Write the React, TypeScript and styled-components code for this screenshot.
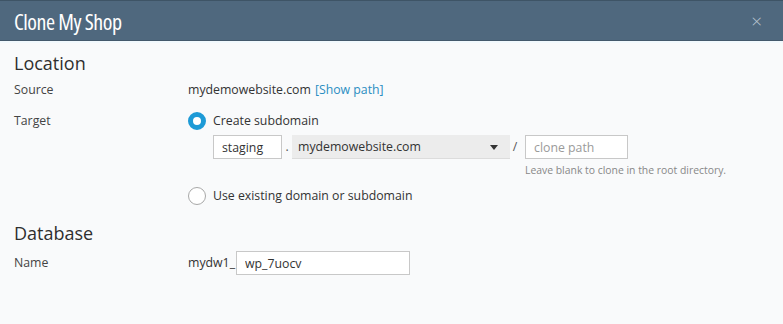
import React from "react";
import styled, { createGlobalStyle } from "styled-components";

//====////==== COMPONENTE ====\\\\====\\
const App = () => {
  return (
    <>
      <Global />
      <Dialog>
        <Header>
          <Title>Clone My Shop</Title>
          <Close>×</Close>
        </Header>
        <Body>
          <Heading>Location</Heading>
          <Row>
            <Label>Source</Label>
            <Field>
              mydemowebsite.com <Link>[Show path]</Link>
            </Field>
          </Row>
          <Row top={13}>
            <Label>Target</Label>
            <Options>
              <Radio>
                <Dot checked />
                Create subdomain
              </Radio>
              <Inline>
                <Input width={69} defaultValue="staging" />
                <Sep>.</Sep>
                <Select>
                  mydemowebsite.com
                  <Caret />
                </Select>
                <Sep>/</Sep>
                <PathBox>
                  <Input width={103} placeholder="clone path" />
                  <Hint>Leave blank to clone in the root directory.</Hint>
                </PathBox>
              </Inline>
              <Radio>
                <Dot />
                Use existing domain or subdomain
              </Radio>
            </Options>
          </Row>
          <Heading second>Database</Heading>
          <Row top={2} center>
            <Label>Name</Label>
            <Field tight>
              mydw1_
              <Input width={174} defaultValue="wp_7uocv" />
            </Field>
          </Row>
        </Body>
      </Dialog>
    </>
  );
};

//====////==== ESTILOS ====\\\\====\\
const Global = createGlobalStyle`
  body {
    margin: 0;
    background: #f9fafb;
    font-family: "Open Sans", "Noto Sans", sans-serif;
    color: #3b3b3b;
  }
`;

const Dialog = styled.div`
  width: 783px;
  height: 324px;
  background: #f9fafb;
`;

const Header = styled.div`
  height: 41px;
  box-sizing: border-box;
  background: #4f687e;
  border-top: 1px solid #3e5466;
  border-bottom: 1px solid #44596b;
  padding: 0 14px;
  display: flex;
  align-items: center;
  justify-content: space-between;
`;

const Title = styled.h1`
  margin: 0;
  font-size: 22px;
  font-weight: 400;
  font-stretch: 80%;
  color: #fff;
  letter-spacing: -0.45px;
`;

const Close = styled.span`
  color: #b9c6d1;
  font-size: 19px;
  font-weight: 300;
  margin-right: 7px;
`;

const Body = styled.div`
  border-top: 2px solid #f2f9fd;
  padding: 8px 14px;
`;

const Heading = styled.h2<{ second?: boolean }>`
  margin: ${(p) => (p.second ? "16px" : "0")} 0 6px;
  font-size: 18px;
  font-weight: 400;
  color: #2f2f2f;
`;

const Row = styled.div<{ top?: number; center?: boolean }>`
  display: flex;
  align-items: ${(p) => (p.center ? "center" : "flex-start")};
  margin-top: ${(p) => p.top ?? 0}px;
  font-size: 12.3px;
  line-height: 18px;
`;

const Label = styled.div`
  width: 174px;
  flex-shrink: 0;
  color: #444;
`;

const Field = styled.div<{ tight?: boolean }>`
  display: flex;
  align-items: center;
  gap: ${(p) => (p.tight ? 1 : 4)}px;
  color: #333;
`;

const Link = styled.span`
  color: #2b8ec2;
`;

const Options = styled.div`
  display: flex;
  flex-direction: column;
`;

const Radio = styled.label`
  display: flex;
  align-items: center;
  gap: 7px;
  color: #333;
`;

const Dot = styled.span<{ checked?: boolean }>`
  width: 18px;
  height: 18px;
  box-sizing: border-box;
  border-radius: 50%;
  background: #fff;
  border: ${(p) => (p.checked ? "5px solid #1d9ad6" : "1px solid #a8a8a8")};
`;

const Inline = styled.div`
  display: flex;
  align-items: flex-start;
  margin: 5px 0 8px 25px;
`;

const Input = styled.input<{ width: number }>`
  width: ${(p) => p.width}px;
  height: 24px;
  box-sizing: border-box;
  border: 1px solid #c8c8c8;
  background: #fff;
  padding: 0 8px;
  font: inherit;
  font-size: 12.3px;
  color: #333;
  outline: none;
  &::placeholder {
    color: #9a9a9a;
  }
`;

const Sep = styled.span`
  width: 10px;
  text-align: center;
  line-height: 24px;
  color: #555;
`;

const Select = styled.div`
  position: relative;
  width: 218px;
  height: 24px;
  box-sizing: border-box;
  background: #ececec;
  border-bottom: 1px solid #dcdcdc;
  padding: 0 6px;
  line-height: 23px;
  color: #333;
`;

const Caret = styled.span`
  position: absolute;
  right: 12px;
  top: 10px;
  border-left: 4px solid transparent;
  border-right: 4px solid transparent;
  border-top: 5px solid #333;
`;

const PathBox = styled.div`
  display: flex;
  flex-direction: column;
  margin-left: 5px;
`;

const Hint = styled.div`
  margin-top: 2px;
  font-size: 10.4px;
  color: #888;
`;

export default App;
